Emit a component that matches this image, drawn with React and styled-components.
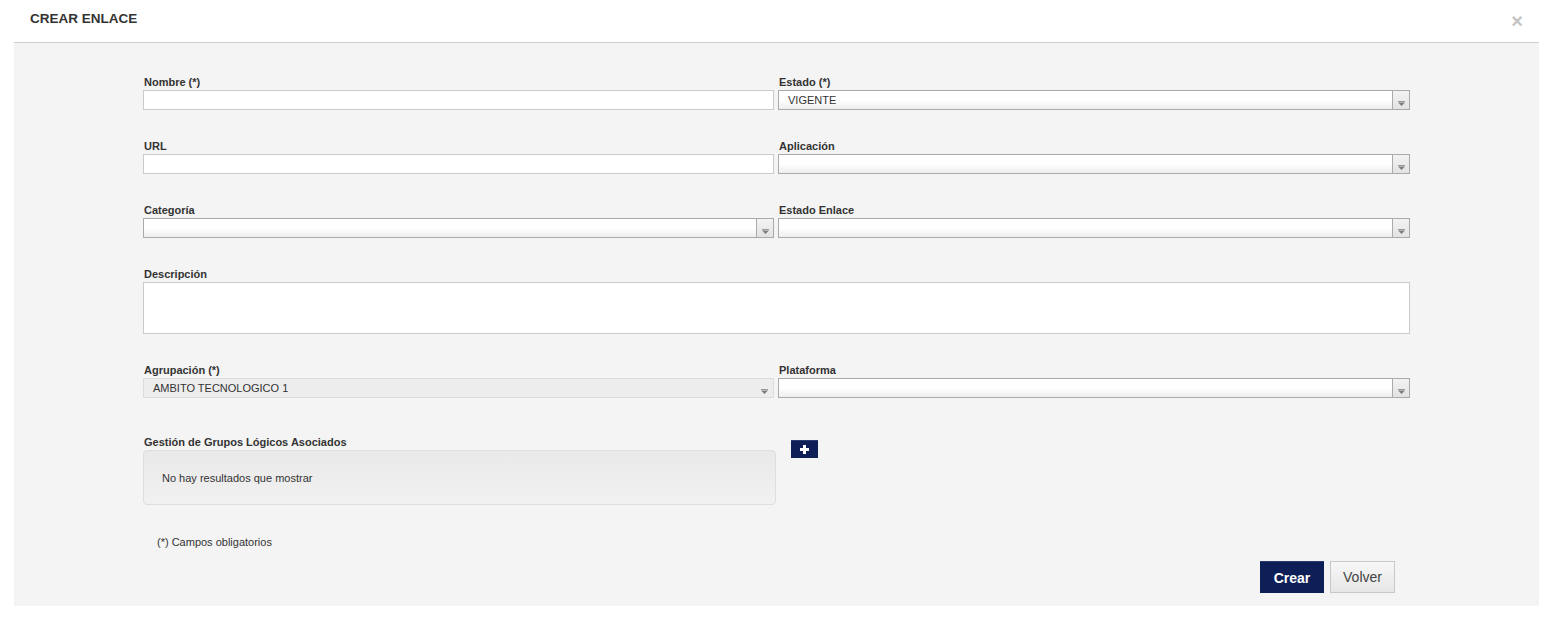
import React from "react";
import styled, { createGlobalStyle, css } from "styled-components";

const GlobalStyle = createGlobalStyle`
  body {
    margin: 0;
    background: #fff;
    font-family: "Liberation Sans", Arial, sans-serif;
    color: #333;
  }
`;

const Modal = styled.div`
  margin-left: 14px;
  width: 1525px;
`;

const Header = styled.div`
  height: 43px;
  border-bottom: 1px solid #cfcfcf;
  display: flex;
  align-items: center;
  justify-content: space-between;
  padding-left: 16px;
  box-sizing: border-box;
  position: relative;
`;

const Title = styled.h3`
  margin: 0;
  margin-top: -6px;
  font-size: 13.5px;
  font-weight: bold;
  color: #333;
`;

const Close = styled.span`
  position: absolute;
  right: 15px;
  top: 11px;
  width: 14px;
  font-size: 20px;
  line-height: 20px;
  color: #c4c4c4;
  font-weight: bold;
  font-family: "Liberation Sans", Arial, sans-serif;
  text-align: center;
`;

const Body = styled.div`
  background: #f4f4f4;
  height: 563px;
  padding: 32px 129px 0 129px;
  box-sizing: border-box;
`;

const Grid = styled.div`
  display: grid;
  grid-template-columns: 631px 632px;
  column-gap: 4px;
  row-gap: 29px;
  width: 1267px;
`;

const Field = styled.div`
  display: flex;
  flex-direction: column;
  ${p => p.wide && css`
    grid-column: 1 / span 2;
  `}
`;

const Label = styled.label`
  font-size: 11px;
  font-weight: bold;
  line-height: 14px;
  color: #333;
  padding-left: 1px;
  margin-bottom: 1px;
`;

const TextInput = styled.div`
  height: 20px;
  box-sizing: border-box;
  border: 1px solid #cacaca;
  background: #fff;
`;

const TextArea = styled.div`
  height: 52px;
  box-sizing: border-box;
  border: 1px solid #cacaca;
  background: #fff;
`;

const SelectBox = styled.div`
  height: 20px;
  box-sizing: border-box;
  border: 1px solid #aaa;
  background: linear-gradient(#fff 0%, #fff 50%, #eee 100%);
  display: flex;
  align-items: center;
  ${p => p.disabled && css`
    border-color: #dcdcdc;
    background: #ededed;
  `}
`;

const SelectValue = styled.span`
  flex: 1;
  font-size: 11px;
  color: #333;
  padding-left: 9px;
  white-space: nowrap;
`;

const ArrowBox = styled.span`
  width: 17px;
  height: 100%;
  border-left: 1px solid #aaa;
  background: linear-gradient(#f3f3f3, #e2e2e2);
  display: flex;
  justify-content: center;
  align-items: flex-end;
  padding-bottom: 3px;
  box-sizing: border-box;
  ${p => p.disabled && css`
    border-left: none;
    background: transparent;
  `}
`;

function Select({ value, disabled }) {
  return (
    <SelectBox disabled={disabled}>
      <SelectValue>{value}</SelectValue>
      <ArrowBox disabled={disabled}>
        <svg width="7" height="5" viewBox="0 0 7 5">
          <rect x="0" y="0" width="7" height="1" fill="#9a9a9a" />
          <path d="M0 1.5 L7 1.5 L3.5 5 Z" fill="#7d7d7d" />
        </svg>
      </ArrowBox>
    </SelectBox>
  );
}

const GroupSection = styled.div`
  margin-top: 37px;
  display: flex;
  align-items: flex-start;
`;

const GroupCol = styled.div`
  width: 633px;
  display: flex;
  flex-direction: column;
`;

const EmptyBox = styled.div`
  height: 55px;
  box-sizing: border-box;
  border: 1px solid #dedede;
  border-radius: 4px;
  background: linear-gradient(#e9e9e9, #f1f1f1);
  display: flex;
  align-items: center;
  padding-left: 18px;
  font-size: 11px;
  color: #333;
`;

const AddButton = styled.button`
  margin-left: 15px;
  margin-top: 5px;
  width: 27px;
  height: 18px;
  padding: 0;
  border: none;
  border-top: 1px solid #2b3d6e;
  background: #0e1f57;
  display: flex;
  align-items: center;
  justify-content: center;
  cursor: pointer;
`;

const Note = styled.div`
  margin-top: 31px;
  padding-left: 14px;
  font-size: 11px;
  color: #333;
`;

const Actions = styled.div`
  display: flex;
  justify-content: flex-end;
  gap: 6px;
  width: 1252px;
  margin-top: 13px;
`;

const Button = styled.button`
  height: 32px;
  font-family: "Liberation Sans", Arial, sans-serif;
  font-size: 14px;
  padding: 0 10px;
  cursor: pointer;
  ${p => p.primary ? css`
    width: 64px;
    background: #0e1f57;
    border: none;
    border-top: 1px solid #2b3d6e;
    color: #fff;
    font-weight: bold;
  ` : css`
    width: 65px;
    background: linear-gradient(#f7f7f7, #e6e6e6);
    border: 1px solid #c8c8c8;
    color: #444;
  `}
`;

export default function App() {
  return (
    <>
      <GlobalStyle />
      <Modal>
        <Header>
          <Title>CREAR ENLACE</Title>
          <Close>×</Close>
        </Header>
        <Body>
          <Grid>
            <Field>
              <Label>Nombre (*)</Label>
              <TextInput />
            </Field>
            <Field>
              <Label>Estado (*)</Label>
              <Select value="VIGENTE" />
            </Field>
            <Field>
              <Label>URL</Label>
              <TextInput />
            </Field>
            <Field>
              <Label>Aplicación</Label>
              <Select value="" />
            </Field>
            <Field>
              <Label>Categoría</Label>
              <Select value="" />
            </Field>
            <Field>
              <Label>Estado Enlace</Label>
              <Select value="" />
            </Field>
            <Field wide>
              <Label>Descripción</Label>
              <TextArea />
            </Field>
            <Field>
              <Label>Agrupación (*)</Label>
              <Select value="AMBITO TECNOLOGICO 1" disabled />
            </Field>
            <Field>
              <Label>Plataforma</Label>
              <Select value="" />
            </Field>
          </Grid>
          <GroupSection>
            <GroupCol>
              <Label>Gestión de Grupos Lógicos Asociados</Label>
              <EmptyBox>No hay resultados que mostrar</EmptyBox>
            </GroupCol>
            <AddButton aria-label="Añadir">
              <svg width="9" height="9" viewBox="0 0 9 9">
                <rect x="3" y="0" width="3" height="9" fill="#fff" />
                <rect x="0" y="3" width="9" height="3" fill="#fff" />
              </svg>
            </AddButton>
          </GroupSection>
          <Note>(*) Campos obligatorios</Note>
          <Actions>
            <Button primary>Crear</Button>
            <Button>Volver</Button>
          </Actions>
        </Body>
      </Modal>
    </>
  );
}
